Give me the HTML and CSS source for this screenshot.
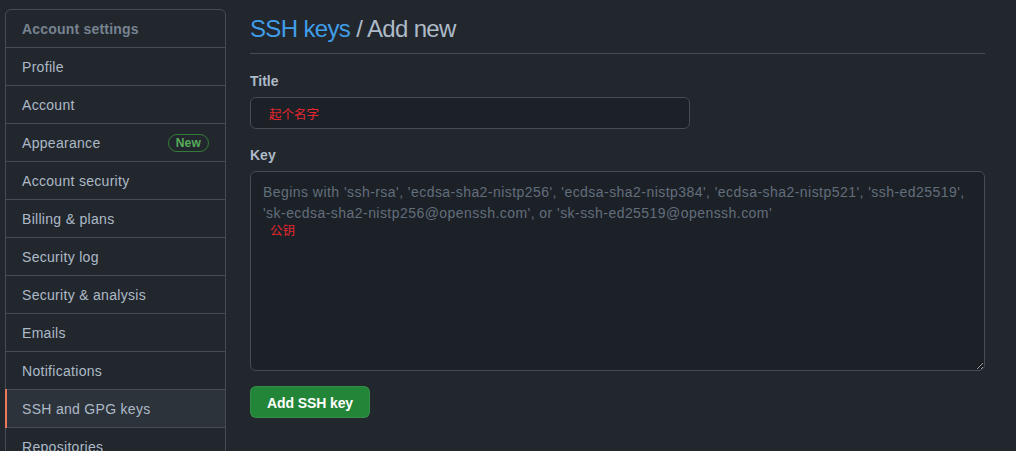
FILE: index.html
```html
<!DOCTYPE html>
<html lang="en">
<head>
<meta charset="utf-8">
<title>SSH keys / Add new</title>
<link rel="stylesheet" href="styles.css">
</head>
<body>
<div class="page">
  <nav class="menu">
    <div class="menu-heading">Account settings</div>
    <a class="menu-item" href="#">Profile</a>
    <a class="menu-item" href="#">Account</a>
    <a class="menu-item" href="#">Appearance <span class="badge">New</span></a>
    <a class="menu-item" href="#">Account security</a>
    <a class="menu-item" href="#">Billing &amp; plans</a>
    <a class="menu-item" href="#">Security log</a>
    <a class="menu-item" href="#">Security &amp; analysis</a>
    <a class="menu-item" href="#">Emails</a>
    <a class="menu-item" href="#">Notifications</a>
    <a class="menu-item selected" href="#">SSH and GPG keys</a>
    <a class="menu-item" href="#">Repositories</a>
  </nav>
  <main class="main">
    <h2 class="subhead"><a href="#" class="crumb">SSH keys</a> / Add new</h2>
    <form class="form">
      <div class="form-group">
        <label class="label" for="title">Title</label>
        <input id="title" class="input title-input" type="text" value="起个名字">
      </div>
      <div class="form-group">
        <label class="label" for="key">Key</label>
        <div class="textarea-wrap">
          <textarea id="key" class="input textarea" placeholder="Begins with 'ssh-rsa', 'ecdsa-sha2-nistp256', 'ecdsa-sha2-nistp384', 'ecdsa-sha2-nistp521', 'ssh-ed25519', 'sk-ecdsa-sha2-nistp256@openssh.com', or 'sk-ssh-ed25519@openssh.com'"></textarea>
          <span class="note">公钥</span>
        </div>
      </div>
      <button type="button" class="btn">Add SSH key</button>
    </form>
  </main>
</div>
</body>
</html>
```
FILE: styles.css
```css
html, body {
  margin: 0;
  padding: 0;
  background: #22272e;
  color: #adbac7;
  font-family: "Liberation Sans", "Noto Sans CJK SC", sans-serif;
  font-size: 14px;
  line-height: 21px;
  overflow: hidden;
}

.page {
  display: flex;
  align-items: flex-start;
  gap: 24px;
  padding: 9px 31px 0 5px;
}

.menu {
  width: 219px;
  flex: none;
  border: 1px solid #444c56;
  border-radius: 6px;
  display: flex;
  flex-direction: column;
}

.menu-heading {
  padding: 9px 16px 7px;
  font-weight: 700;
  color: #768390;
  border-bottom: 1px solid #444c56;
  letter-spacing: 0.2px;
}

.menu-item {
  display: flex;
  align-items: center;
  justify-content: space-between;
  padding: 9px 16px 7px;
  color: #adbac7;
  text-decoration: none;
  border-bottom: 1px solid #444c56;
  position: relative;
  letter-spacing: 0.3px;
}

.menu-item.selected {
  background: #2d333b;
}

.menu-item.selected::before {
  content: "";
  position: absolute;
  left: -1px;
  top: -1px;
  bottom: -1px;
  width: 2px;
  background: #ec775c;
}

.badge {
  font-size: 12px;
  font-weight: 700;
  line-height: 16px;
  padding: 0 7px;
  border: 1px solid #347d39;
  border-radius: 2em;
  color: #57ab5a;
  letter-spacing: 0.2px;
  margin-top: -2px;
}

.main {
  flex: 1;
  padding-top: 2px;
}

.subhead {
  margin: 0 0 16px;
  padding: 0 0 6px;
  font-size: 24px;
  line-height: 36px;
  font-weight: 400;
  color: #adbac7;
  border-bottom: 1px solid #444c56;
  letter-spacing: -0.65px;
}

.crumb {
  color: #409ee9;
  text-decoration: none;
}

.form-group {
  margin-bottom: 15px;
  display: flex;
  flex-direction: column;
  align-items: flex-start;
}

.label {
  font-weight: 700;
  padding-top: 1px;
  margin-bottom: 5px;
  color: #adbac7;
}

.input {
  box-sizing: border-box;
  background: #1c2128;
  border: 1px solid #444c56;
  border-radius: 6px;
  font-family: "Liberation Sans", "Noto Sans CJK SC", sans-serif;
  outline: none;
}

.title-input {
  width: 440px;
  height: 32px;
  padding: 1px 12px 0 18px;
  color: #e8262f;
  font-size: 12.5px;
}

.textarea-wrap {
  position: relative;
  width: 100%;
}

.textarea {
  display: block;
  width: 100%;
  height: 200px;
  padding: 10px 12px 8px;
  color: #adbac7;
  font-size: 14px;
  line-height: 21px;
  letter-spacing: 0.45px;
  resize: vertical;
}

.textarea::placeholder {
  color: #636e7b;
}

.note {
  position: absolute;
  left: 20px;
  top: 51px;
  font-size: 12.5px;
  color: #e8262f;
  line-height: 18px;
}

.btn {
  height: 32px;
  padding: 1px 16px 0;
  background: #238538;
  color: #ffffff;
  border: 1px solid rgba(205, 217, 229, 0.1);
  border-radius: 6px;
  font-family: "Liberation Sans", sans-serif;
  font-size: 14px;
  font-weight: 700;
  letter-spacing: -0.1px;
}
```
